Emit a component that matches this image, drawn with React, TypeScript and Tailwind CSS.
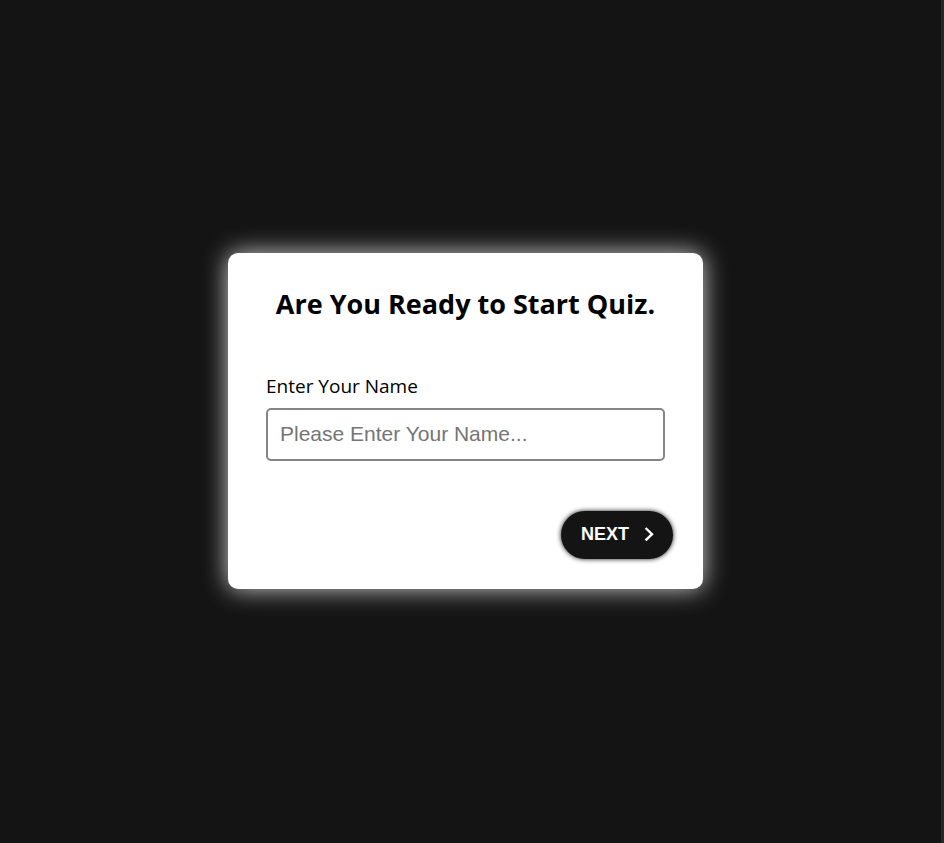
import { useState, type FormEvent } from "react";

export default function App() {
  const [name, setName] = useState("");

  const handleSubmit = (event: FormEvent) => {
    event.preventDefault();
  };

  return (
    <main className="flex min-h-screen items-center justify-center border-r-3 border-[#26252a] bg-[#141414] pr-[10px] pb-0.5 font-['Open_Sans',sans-serif] text-black">
      <form
        onSubmit={handleSubmit}
        className="flex w-full max-w-[475px] flex-col rounded-[10px] bg-white p-[30px] shadow-[0_0_25px_#cfcfcf]"
      >
        <h1 className="text-center text-[27px] leading-[42px] font-bold whitespace-nowrap">
          Are You Ready to Start Quiz.
        </h1>
        <div className="mt-12 flex flex-col gap-2 px-2">
          <label htmlFor="name" className="text-[19px] leading-[27px]">
            Enter Your Name
          </label>
          <input
            id="name"
            type="text"
            value={name}
            onChange={(event) => setName(event.target.value)}
            placeholder="Please Enter Your Name..."
            className="h-[53px] w-full rounded-[5px] border-2 border-[#858585] px-3 font-['Liberation_Sans',sans-serif] text-[21px] placeholder:text-[#757575]"
          />
        </div>
        <button
          type="submit"
          className="mt-[50px] flex h-12 items-center gap-3 self-end rounded-full bg-[#141414] pr-4 pl-5 font-['Liberation_Sans',sans-serif] text-[18px] font-bold text-white shadow-[0_0_5px_#141414]"
        >
          NEXT
          <svg
            viewBox="0 0 16 16"
            className="size-4"
            fill="none"
            stroke="currentColor"
            strokeWidth="2.4"
            aria-hidden="true"
          >
            <path d="M4.600 1 11 7.200l-6.400 6.200" />
          </svg>
        </button>
      </form>
    </main>
  );
}
